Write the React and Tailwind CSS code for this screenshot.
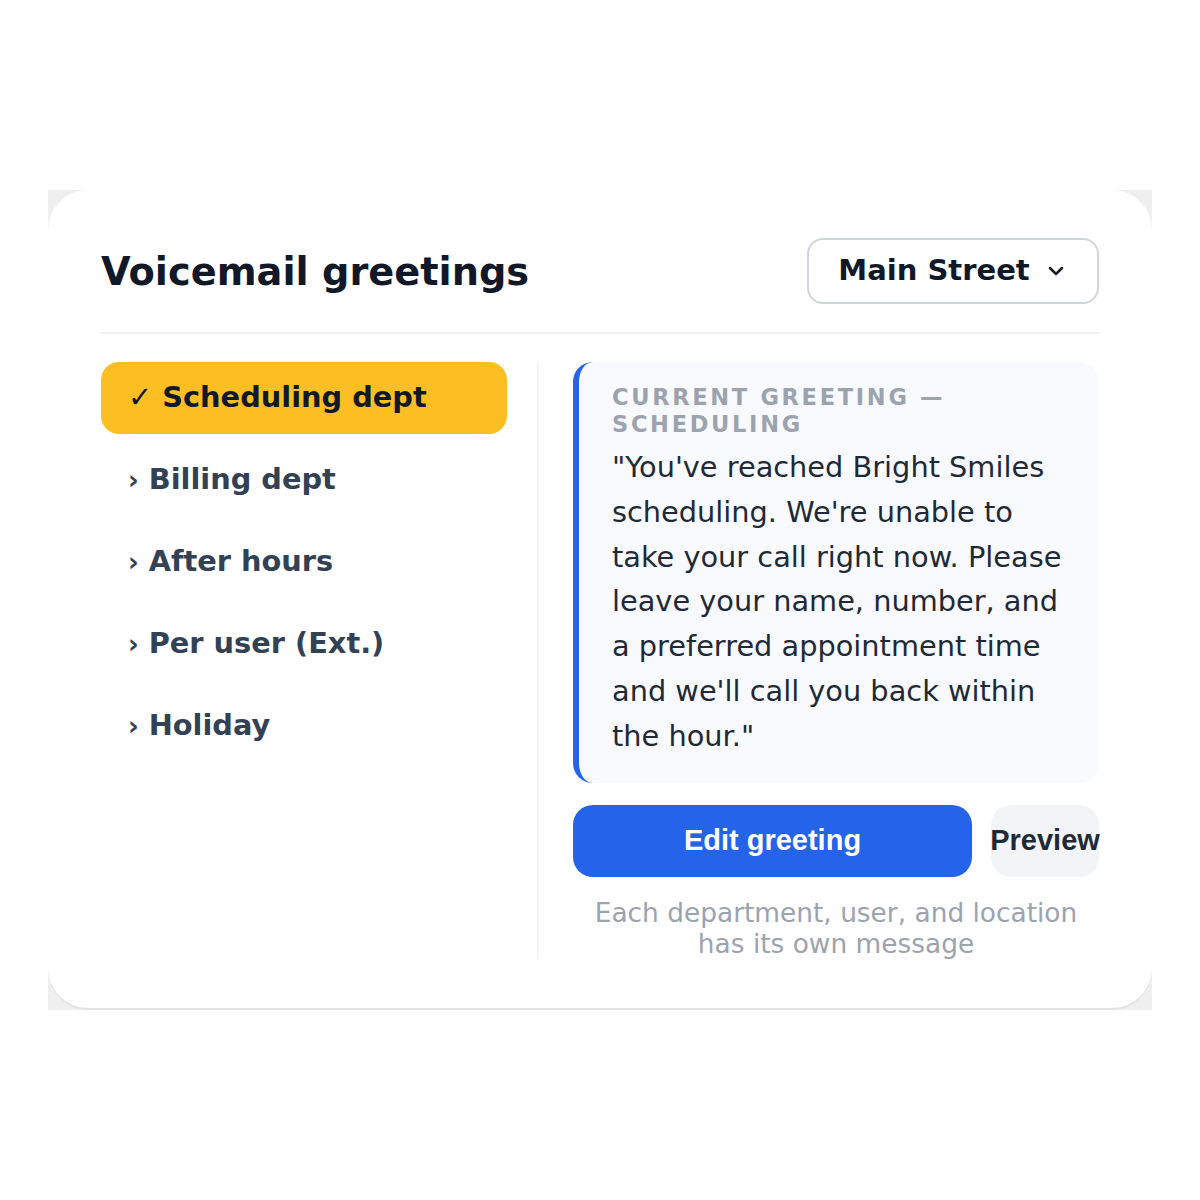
import React from "react";
import { ChevronDown } from "lucide-react";

const sans = { fontFamily: '"DejaVu Sans", "Liberation Sans", sans-serif' };
const arial = { fontFamily: '"Liberation Sans", Arial, sans-serif' };

const groups = [
  { label: "Scheduling dept", active: true },
  { label: "Billing dept" },
  { label: "After hours" },
  { label: "Per user (Ext.)" },
  { label: "Holiday" },
];

export default function App() {
  return (
    <div className="w-[1200px] h-[1200px] bg-white flex items-center justify-center" style={sans}>
      <div className="w-[1104px] h-[820px] bg-[#efefef] overflow-hidden">
        <div className="w-full h-[818px] bg-white rounded-[40px] shadow-[0_2px_0_#e4e4e4] px-[53px] pt-[48px] pb-[50px] flex flex-col">
          {/* header */}
          <div className="flex items-center justify-between pb-[28px] border-b-2 border-[#f1f1f1]">
            <h1 className="text-[38.3px] font-bold text-[#111827] leading-none pt-[2px]">Voicemail greetings</h1>
            <button
              className="h-[66px] w-[292px] rounded-[16px] border-2 border-[#d1d5db] bg-white flex items-center justify-center gap-[14px] text-[29px] font-bold text-[#111827]"
              style={sans}
            >
              <span>Main Street</span>
              <ChevronDown size={24} strokeWidth={2.5} className="text-[#111827]" />
            </button>
          </div>

          {/* body */}
          <div className="flex flex-1 mt-[28px]">
            <div className="w-[438px] pr-[30px] border-r-2 border-[#f4f4f4] flex flex-col gap-[10px]">
              {groups.map((g) =>
                g.active ? (
                  <div
                    key={g.label}
                    className="h-[72px] rounded-[18px] bg-[#fbbf24] flex items-center px-[27px] text-[28.8px] font-bold text-[#111827]"
                  >
                    <span className="text-[29px] mr-[10px]">✓</span>
                    <span>{g.label}</span>
                  </div>
                ) : (
                  <div
                    key={g.label}
                    className="h-[72px] flex items-center px-[27px] text-[28.8px] font-bold text-[#334155]"
                  >
                    <span className="text-[26px] mr-[10px]">›</span>
                    <span>{g.label}</span>
                  </div>
                )
              )}
            </div>

            <div className="flex-1 pl-[34px] flex flex-col">
              <div className="rounded-[20px] border-l-[6px] border-[#2563eb] bg-[#f8fafd] pl-[33px] pr-[30px] pt-[22px] pb-[24px]">
                <div className="text-[22.5px] font-bold uppercase tracking-[0.12em] leading-[27px] text-[#9ca3af]">
                  Current greeting — Scheduling
                </div>
                <p className="mt-[7px] text-[28.8px] leading-[44.8px] text-[#1f2937]">
                  "You've reached Bright Smiles scheduling. We're unable to take your call right now. Please
                  leave your name, number, and a preferred appointment time and we'll call you back within the
                  hour."
                </p>
              </div>

              <div className="flex gap-[19px] mt-[22px]">
                <button
                  className="flex-1 h-[72px] rounded-[20px] bg-[#2563eb] text-white text-[29px] font-bold"
                  style={arial}
                >
                  Edit greeting
                </button>
                <button
                  className="w-[108px] h-[72px] rounded-[20px] bg-[#f3f4f6] text-[#1f2937] text-[29px] font-bold whitespace-nowrap flex items-center justify-center"
                  style={arial}
                >
                  Preview
                </button>
              </div>

              <p className="mt-[20px] text-center text-[26.4px] leading-[31px] text-[#9ca3af]">
                Each department, user, and location has its own message
              </p>
            </div>
          </div>
        </div>
      </div>
    </div>
  );
}
